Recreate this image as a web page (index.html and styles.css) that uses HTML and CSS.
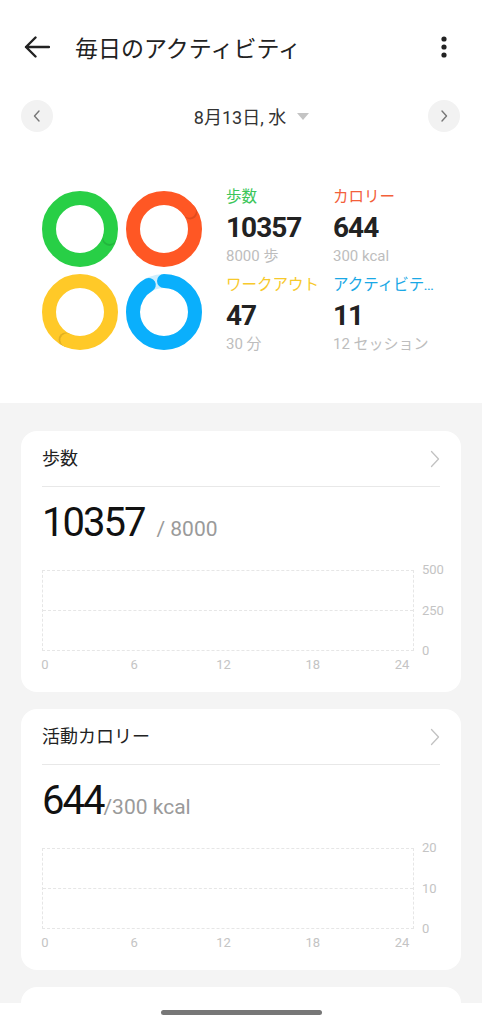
FILE: index.html
```html
<!DOCTYPE html>
<html lang="ja">
<head>
    <meta charset="UTF-8">
    <meta name="viewport" content="width=device-width, initial-scale=1.0">
    <title>毎日のアクティビティ</title>
    <link rel="stylesheet" href="styles.css">
</head>

<body>
    <header class="topbar">
        <svg class="back" width="26" height="22" viewBox="0 0 26 22">
            <path d="M2 11 H25 M11.5 1.5 L2 11 L11.5 20.5" fill="none" stroke="#222" stroke-width="2.4" stroke-linecap="round" stroke-linejoin="round"/>
        </svg>
        <h1 class="title">毎日のアクティビティ</h1>
        <svg class="more" width="24" height="24" viewBox="0 0 24 24">
            <circle cx="12" cy="4" r="2.6" fill="#222"/>
            <circle cx="12" cy="12" r="2.6" fill="#222"/>
            <circle cx="12" cy="20" r="2.6" fill="#222"/>
        </svg>
    </header>

    <div class="date-row">
        <button class="nav-btn">
            <svg width="10" height="14" viewBox="0 0 10 14"><path d="M7 2 L2.5 7 L7 12" fill="none" stroke="#777" stroke-width="1.4" stroke-linecap="round" stroke-linejoin="round"/></svg>
        </button>
        <div class="date">
            <span>8月13日, 水</span>
            <span class="caret"></span>
        </div>
        <button class="nav-btn">
            <svg width="10" height="14" viewBox="0 0 10 14"><path d="M3 2 L7.5 7 L3 12" fill="none" stroke="#777" stroke-width="1.4" stroke-linecap="round" stroke-linejoin="round"/></svg>
        </button>
    </div>

    <section class="summary">
        <div class="rings">
            <!-- steps: 10357 / 8000 -->
            <svg width="76" height="76" viewBox="0 0 76 76">
                <circle cx="38" cy="38" r="31" fill="none" stroke="#28cf46" stroke-width="14"/>
                <circle cx="67.4" cy="47.9" r="7" fill="rgba(0,0,0,0.12)"/>
                <circle cx="67.9" cy="46" r="7" fill="#28cf46"/>
            </svg>
            <!-- calories: 644 / 300 -->
            <svg width="76" height="76" viewBox="0 0 76 76">
                <circle cx="38" cy="38" r="31" fill="none" stroke="#ff5724" stroke-width="14"/>
                <circle cx="64.3" cy="21.4" r="7" fill="rgba(0,0,0,0.12)"/>
                <circle cx="63.1" cy="19.8" r="7" fill="#ff5724"/>
            </svg>
            <!-- workout: 47 / 30 -->
            <svg width="76" height="76" viewBox="0 0 76 76">
                <circle cx="38" cy="38" r="31" fill="none" stroke="#ffc928" stroke-width="14"/>
                <circle cx="23.6" cy="65.5" r="7" fill="rgba(0,0,0,0.12)"/>
                <circle cx="25.4" cy="66.3" r="7" fill="#ffc928"/>
            </svg>
            <!-- activity: 11 / 12 -->
            <svg width="76" height="76" viewBox="0 0 76 76">
                <circle cx="38" cy="38" r="31" fill="none" stroke="#cdeefd" stroke-width="14"/>
                <circle cx="38" cy="38" r="31" fill="none" stroke="#0aaffc" stroke-width="14" stroke-linecap="round" stroke-dasharray="178.6 200" transform="rotate(-90 38 38)"/>
            </svg>
        </div>

        <div class="stats">
            <div class="stat">
                <div class="stat-label green">歩数</div>
                <div class="stat-value">10357</div>
                <div class="stat-goal">8000 歩</div>
            </div>
            <div class="stat">
                <div class="stat-label orange">カロリー</div>
                <div class="stat-value">644</div>
                <div class="stat-goal">300 kcal</div>
            </div>
            <div class="stat">
                <div class="stat-label yellow">ワークアウト</div>
                <div class="stat-value">47</div>
                <div class="stat-goal">30 分</div>
            </div>
            <div class="stat">
                <div class="stat-label blue">アクティビティ</div>
                <div class="stat-value">11</div>
                <div class="stat-goal">12 セッション</div>
            </div>
        </div>
    </section>

    <main class="cards">
        <article class="card">
            <div class="card-head">
                <h2>歩数</h2>
                <svg width="10" height="18" viewBox="0 0 10 18"><path d="M1.5 1.5 L8.5 9 L1.5 16.5" fill="none" stroke="#c2c2c2" stroke-width="1.3" stroke-linecap="round" stroke-linejoin="round"/></svg>
            </div>
            <div class="big">
                <span class="big-value">10357</span>
                <span class="big-goal spaced">/ 8000</span>
            </div>
            <div class="chart">
                <div class="plot"><div class="mid"></div></div>
                <div class="y-axis"><span>500</span><span>250</span><span>0</span></div>
                <div class="x-axis"><span>0</span><span>6</span><span>12</span><span>18</span><span>24</span></div>
            </div>
        </article>

        <article class="card">
            <div class="card-head">
                <h2>活動カロリー</h2>
                <svg width="10" height="18" viewBox="0 0 10 18"><path d="M1.5 1.5 L8.5 9 L1.5 16.5" fill="none" stroke="#c2c2c2" stroke-width="1.3" stroke-linecap="round" stroke-linejoin="round"/></svg>
            </div>
            <div class="big">
                <span class="big-value">644</span>
                <span class="big-goal">/300 kcal</span>
            </div>
            <div class="chart">
                <div class="plot"><div class="mid"></div></div>
                <div class="y-axis"><span>20</span><span>10</span><span>0</span></div>
                <div class="x-axis"><span>0</span><span>6</span><span>12</span><span>18</span><span>24</span></div>
            </div>
        </article>

        <article class="card card-peek"></article>
    </main>

    <div class="home-bar"><span></span></div>
</body>
</html>
```

FILE: styles.css
```css
/* Base page */
body {
    margin: 0;
    background-color: #f4f4f4;
    font-family: Roboto, "Noto Sans CJK JP", sans-serif;
    color: #222;
}

/* Top bar */
.topbar {
    display: flex;
    align-items: center;
    height: 94px;
    padding: 0 26px 0 24px;
    background-color: #fff;
}

.back {
    flex: none;
}

.title {
    flex: 1;
    margin: 0 0 0 25px;
    font-size: 23px;
    font-weight: 400;
    color: #222;
}

.more {
    flex: none;
}

/* Date switcher */
.date-row {
    display: flex;
    align-items: center;
    padding: 6px 22px 0 21px;
    background-color: #fff;
}

.nav-btn {
    display: flex;
    align-items: center;
    justify-content: center;
    width: 32px;
    height: 32px;
    padding: 0;
    border: none;
    border-radius: 50%;
    background-color: #f2f2f2;
}

.date {
    flex: 1;
    display: flex;
    align-items: center;
    justify-content: center;
    gap: 11px;
    padding-left: 22px;
    font-size: 18px;
    color: #333;
}

.caret {
    width: 0;
    height: 0;
    border-left: 6px solid transparent;
    border-right: 6px solid transparent;
    border-top: 7px solid #c4c4c4;
}

/* Summary rings + stats */
.summary {
    display: flex;
    align-items: flex-start;
    padding: 55px 0 49px 42px;
    background-color: #fff;
}

.rings {
    display: grid;
    grid-template-columns: 76px 76px;
    column-gap: 8px;
    row-gap: 7px;
    margin-top: 4px;
}

.stats {
    display: grid;
    grid-template-columns: 107px 104px;
    row-gap: 9px;
    margin-left: 24px;
}

.stat {
    min-width: 0;
}

.stat-label {
    font-size: 15.5px;
    line-height: 20px;
    white-space: nowrap;
    overflow: hidden;
    text-overflow: ellipsis;
}

.green { color: #3cc65a; }
.orange { color: #f3603a; }
.yellow { color: #f7c92c; }
.blue { color: #1aa8e6; }

.stat-value {
    margin-top: 5px;
    font-size: 28px;
    line-height: 32px;
    font-weight: 700;
    letter-spacing: -1px;
    color: #222;
}

.stat-goal {
    margin-top: 2px;
    font-size: 15px;
    line-height: 20px;
    color: #bdbdbd;
    white-space: nowrap;
}

/* Cards */
.cards {
    display: flex;
    flex-direction: column;
    gap: 17px;
    padding: 28px 21px 40px;
}

.card {
    background-color: #fff;
    border-radius: 16px;
    padding: 16px 21px 19px;
}

.card-head {
    display: flex;
    align-items: center;
    justify-content: space-between;
    padding-bottom: 15px;
    border-bottom: 1px solid #e8e8e8;
}

.card-head h2 {
    margin: 0;
    font-size: 18px;
    line-height: 24px;
    font-weight: 400;
    color: #222;
}

.big {
    display: flex;
    align-items: baseline;
    margin-top: 14px;
    line-height: 44px;
}

.big-value {
    font-size: 40px;
    letter-spacing: -2px;
    color: #111;
}

.big-goal {
    font-size: 21px;
    color: #9a9a9a;
}

.big-goal.spaced {
    margin-left: 12px;
}

/* Empty chart */
.chart {
    display: grid;
    grid-template-columns: 372px 1fr;
    margin-top: 19px;
}

.plot {
    height: 79px;
    border: 1px dashed #e6e6e6;
}

.plot .mid {
    margin-top: 39px;
    border-top: 1px dashed #e6e6e6;
}

.y-axis {
    display: flex;
    flex-direction: column;
    justify-content: space-between;
    height: 97px;
    margin: -8px 0;
    padding-left: 8px;
    font-size: 13px;
    line-height: 16px;
    color: #c4c4c4;
}

.x-axis {
    display: flex;
    justify-content: space-between;
    margin: 6px 2px 0 -7px;
    font-size: 13px;
    line-height: 16px;
    color: #c4c4c4;
}

.x-axis span {
    width: 20px;
    text-align: center;
}

.card-peek {
    height: 60px;
}

/* System navigation bar */
.home-bar {
    position: fixed;
    left: 0;
    right: 0;
    bottom: 0;
    height: 21px;
    background-color: #fff;
    display: flex;
    justify-content: center;
    padding-top: 7px;
    box-sizing: border-box;
}

.home-bar span {
    width: 161px;
    height: 5px;
    border-radius: 3px;
    background-color: #777;
}
```
